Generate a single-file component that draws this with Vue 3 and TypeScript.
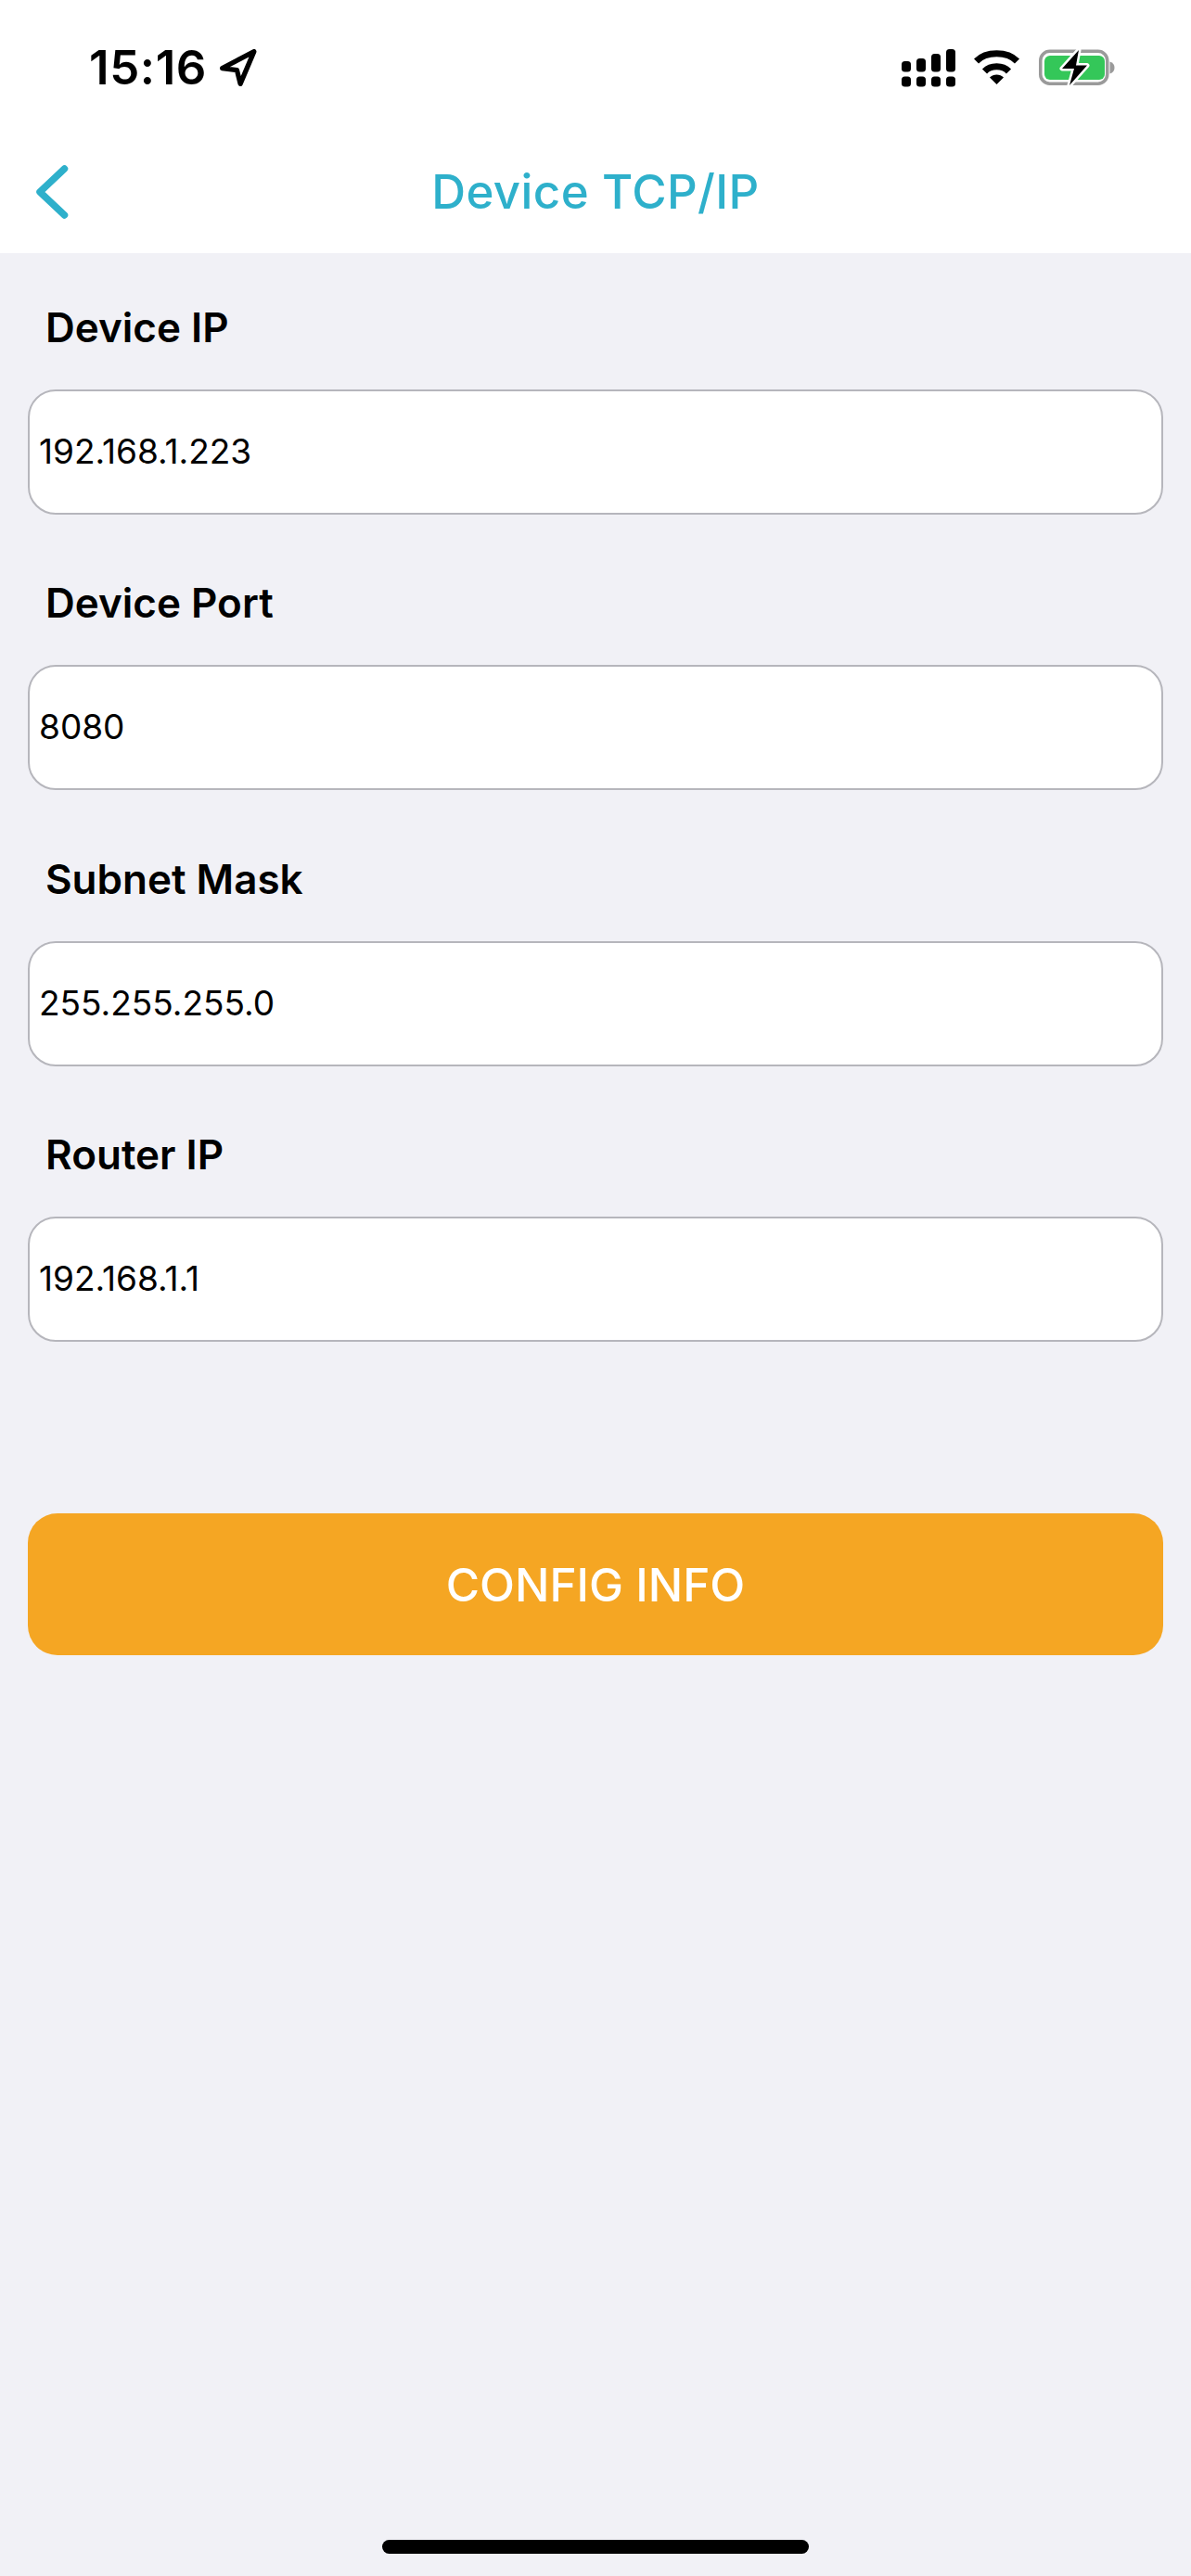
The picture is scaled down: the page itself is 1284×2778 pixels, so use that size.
<template>
  <div class="screen">
    <header class="top">
      <div class="status">
        <div class="status__left">
          <span class="status__time">15:16</span>
          <svg class="status__arrow" width="40" height="40" viewBox="0 0 38 38">
            <path d="M2.5 19.5 L35 2.5 L21 35.5 L17.5 21.5 Z" fill="none" stroke="#000" stroke-width="5" stroke-linejoin="round" />
          </svg>
        </div>
        <div class="status__right">
          <svg width="58" height="41" viewBox="0 0 58 41">
            <rect x="0" y="13" width="10" height="11.5" rx="3.5" />
            <rect x="16" y="10" width="10" height="14.5" rx="3.5" />
            <rect x="32" y="5" width="10" height="19.5" rx="3.5" />
            <rect x="48" y="0" width="10" height="24.5" rx="3.5" />
            <rect x="0" y="29.5" width="10" height="11" rx="3.5" />
            <rect x="16" y="29.5" width="10" height="11" rx="3.5" />
            <rect x="32" y="29.5" width="10" height="11" rx="3.5" />
            <rect x="48" y="29.5" width="10" height="11" rx="3.5" />
          </svg>
          <svg width="50" height="38" viewBox="0 0 50 38">
            <path d="M2.5 12 C13 1 36 1 46.5 12" fill="none" stroke="#000" stroke-width="7" />
            <path d="M11.5 23 C18 16 31 16 37.5 23" fill="none" stroke="#000" stroke-width="7" />
            <path d="M17 29.5 C21 25.5 28 25.5 32 29.5 L24.5 37 Z" />
          </svg>
          <svg width="82" height="42" viewBox="0 0 82 42">
            <rect x="1.75" y="3.25" width="72" height="35" rx="10" fill="none" stroke="#9a9a9a" stroke-width="3.5" />
            <rect x="6" y="8" width="65" height="26" rx="6" fill="#34c759" />
            <path d="M76.5 14.5 C80 15.5 81.5 18 81.5 21 C81.5 24 80 26.5 76.5 27.5 Z" fill="#9a9a9a" />
            <path d="M43 2 L25 22 H38 L33 40 L52 18.5 H40 Z" fill="#000" stroke="#fff" stroke-width="5" stroke-linejoin="round" paint-order="stroke" />
          </svg>
        </div>
      </div>
      <nav class="nav">
        <svg class="nav__back" width="36" height="60" viewBox="0 0 36 60">
          <path d="M31.5 5 L5 30 L31.5 55" fill="none" stroke="#2eb0cb" stroke-width="7.5" stroke-linecap="round" stroke-linejoin="round" />
        </svg>
        <h1 class="nav__title">Device TCP/IP</h1>
      </nav>
    </header>

    <main class="form">
      <section v-for="field in fields" :key="field.label" class="field">
        <label class="field__label">{{ field.label }}</label>
        <div class="field__box">{{ field.value }}</div>
      </section>
      <button type="button" class="submit">CONFIG INFO</button>
    </main>

    <div class="home-bar" />
  </div>
</template>

<script setup lang="ts">
type Field = {
  label: string
  value: string
}

const fields: Field[] = [
  { label: 'Device IP', value: '192.168.1.223' },
  { label: 'Device Port', value: '8080' },
  { label: 'Subnet Mask', value: '255.255.255.0' },
  { label: 'Router IP', value: '192.168.1.1' },
]
</script>

<style>
html,
body {
  margin: 0;
  background: #f1f1f6;
}
</style>

<style scoped>
.screen {
  width: 1284px;
  height: 2778px;
  display: flex;
  flex-direction: column;
  background: #f1f1f6;
  color: #000;
  font-family: Inter, 'Liberation Sans', sans-serif;
  overflow: hidden;
}

.top {
  height: 273px;
  flex: none;
  background: #fff;
}

.status {
  height: 126px;
  padding: 52px 82px 0 96px;
  box-sizing: border-box;
  display: flex;
  justify-content: space-between;
  align-items: flex-start;
}

.status__left {
  display: flex;
  align-items: center;
  gap: 14px;
  height: 42px;
}

.status__time {
  font-size: 51px;
  font-weight: 600;
  line-height: 42px;
  letter-spacing: 0.6px;
}

.status__right {
  display: flex;
  align-items: center;
  gap: 20px;
}

.nav {
  position: relative;
  height: 147px;
  display: flex;
  align-items: center;
  justify-content: center;
}

.nav__back {
  position: absolute;
  left: 38px;
  top: 51px;
}

.nav__title {
  margin: 0;
  font-size: 51px;
  font-weight: 500;
  letter-spacing: 0.4px;
  color: #2eb0cb;
  position: relative;
  top: 7px;
}

.form {
  padding: 0 30px;
  display: flex;
  flex-direction: column;
}

.field {
  height: 297.3px;
  display: flex;
  flex-direction: column;
}

.field__label {
  height: 147px;
  padding: 53px 0 0 19px;
  box-sizing: border-box;
  font-size: 44px;
  line-height: 54px;
  font-weight: 600;
}

.field__box {
  height: 135px;
  box-sizing: border-box;
  border: 2px solid #b6b6bc;
  border-radius: 30px;
  background: #fff;
  padding: 0 0 2px 10px;
  display: flex;
  align-items: center;
  font-size: 37px;
}

.submit {
  margin-top: 170px;
  height: 153px;
  border: none;
  border-radius: 32px;
  background: #f5a623;
  color: #fff;
  font-family: inherit;
  font-size: 49.5px;
  font-weight: 500;
}

.home-bar {
  width: 460px;
  height: 15px;
  margin: auto auto 24px;
  border-radius: 8px;
  background: #000;
}
</style>
